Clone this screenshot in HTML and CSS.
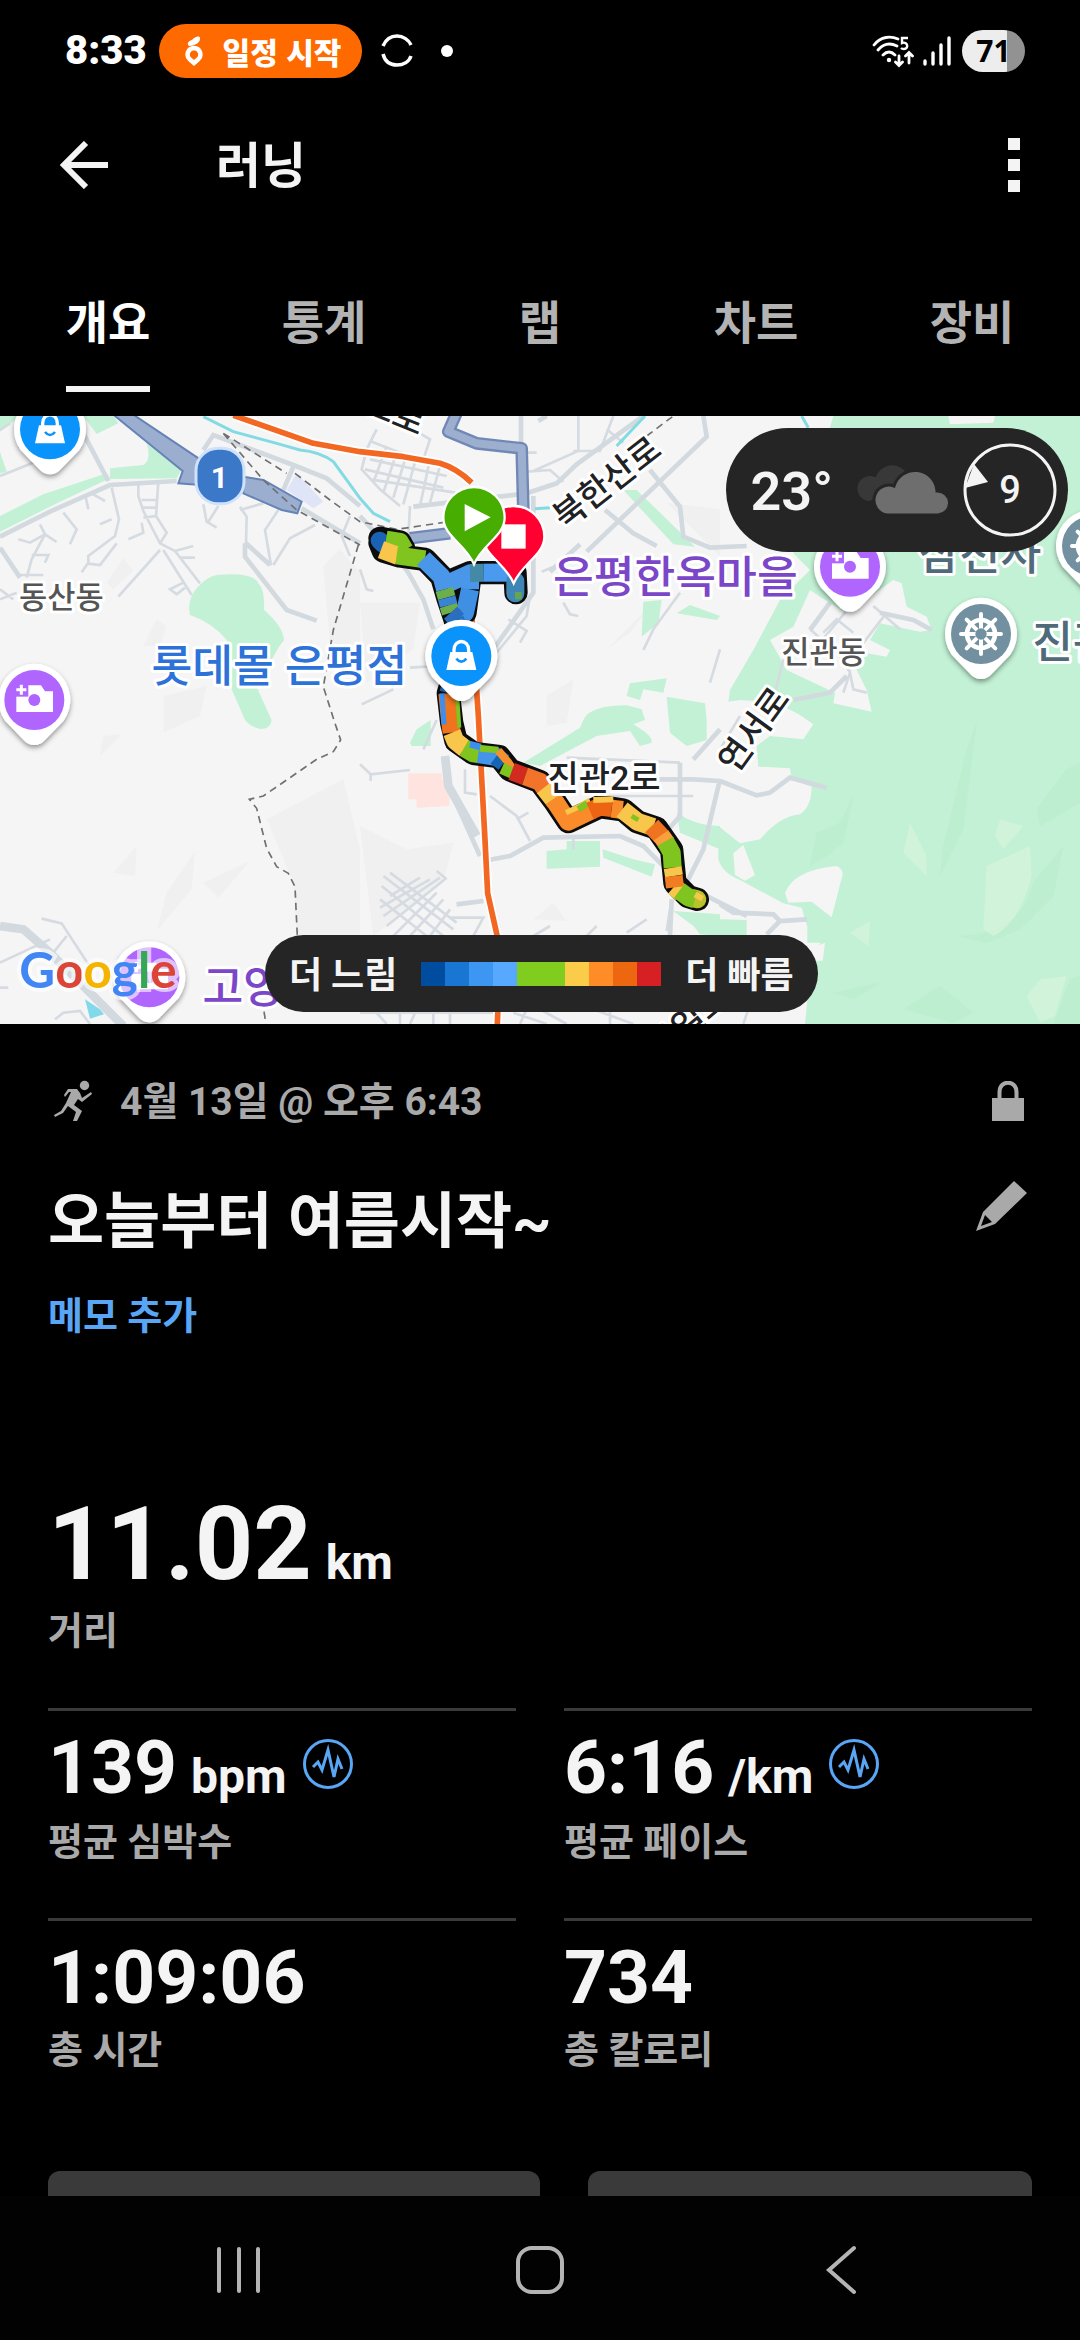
FILE: index.html
```html
<!DOCTYPE html>
<html lang="ko">
<head>
<meta charset="utf-8">
<meta name="viewport" content="width=device-width, initial-scale=1">
<title>러닝</title>
<link rel="stylesheet" href="styles.css">
</head>
<body>
<div class="status">
  <span class="clock">8:33</span>
  <span class="event"><svg width="18" height="30" viewBox="0 0 18 30" aria-hidden="true"><path d="M4 10C1 7 4 5 7 4C10 0 16-1 15 3C15 7 9 10 4 10Z" fill="#fff"/><path d="M9 12a6.500 6.500 0 0 1 4 11.500L9 27L5 23.500A6.500 6.500 0 0 1 9 12Z" fill="none" stroke="#fff" stroke-width="4.500"/></svg>일정 시작</span>
  <svg class="ring" width="32" height="34" viewBox="0 0 32 34" aria-hidden="true"><path d="M2 12C5 5 10 2 16 2S28 6 30 11M2 20C4 28 10 31 16 31S28 28 30 22" fill="none" stroke="#fff" stroke-width="3.500"/></svg>
  <span class="dot"></span>
  <svg class="wifi" width="42" height="34" viewBox="0 0 42 34" aria-hidden="true"><g fill="none" stroke="#fff" stroke-width="2.800" stroke-linecap="round"><path d="M2 11C9 2 19 2 26 5M6 16C12 9 19 9 25 12M11 21C15 17 19 17 23 21M27 22V31M23.500 28L27 31.500L30.500 28M37 29V19M33.500 22L37 18.500L40.500 22"/></g><circle cx="17" cy="26" r="2.200" fill="#fff"/><path d="M36 4H30V9C36 7 37 15 32 15Q30 15 29 14" fill="none" stroke="#fff" stroke-width="2.400"/></svg>
  <svg class="signal" width="28" height="32" viewBox="0 0 28 32" aria-hidden="true"><path d="M2 26V29M10 18V29M18 10V29M26 3V29" stroke="#fff" stroke-width="3.400" stroke-linecap="round"/></svg>
  <span class="battery">71</span>
</div>
<header class="bar">
  <button class="icon" aria-label="뒤로"><svg width="48" height="48" viewBox="0 0 48 48"><path d="M26 2L4 24L26 46M3 24H48" fill="none" stroke="#f4f4f4" stroke-width="6"/></svg></button>
  <h1>러닝</h1>
  <button class="icon" aria-label="더보기"><svg width="12" height="54" viewBox="0 0 12 54"><path d="M0 0H12V12H0ZM0 21H12V33H0ZM0 42H12V54H0Z" fill="#f4f4f4"/></svg></button>
</header>
<nav class="tabs">
  <a href="#overview" class="tab active"><span>개요</span></a>
  <a href="#stats" class="tab"><span>통계</span></a>
  <a href="#laps" class="tab"><span>랩</span></a>
  <a href="#charts" class="tab"><span>차트</span></a>
  <a href="#gear" class="tab"><span>장비</span></a>
</nav>
<main id="overview">
<section class="map">
<svg class="canvas" viewBox="0 0 3240 1824" preserveAspectRatio="xMidYMid slice">
<defs>
  <path id="pin" d="M0 135Q-20 135-35 117L-88 62A108 108 0 1 1 88 62L35 117Q20 135 0 135Z"/>
  <path id="drop" d="M0 140C-25 80-92 55-92 0A92 92 0 1 1 92 0C92 55 25 80 0 140Z"/>
  <g id="bag"><use href="#pin" fill="#fff" filter="url(#shadow)"/><circle r="90" fill="#0a93fb"/><path d="M-33-12H33L45 42H-45Z" fill="#fff"/><path d="M-22-8V-18C-22-52 22-52 22-18V-8" fill="none" stroke="#fff" stroke-width="10"/><path d="M-15 8Q0 26 15 8" fill="none" stroke="#0a93fb" stroke-width="8"/></g>
  <g id="camera"><use href="#pin" fill="#fff" filter="url(#shadow)"/><circle r="90" fill="#b065ff"/><path d="M-54 36V-20H-20V-44H20L32-26H56V36Z" fill="#fff"/><path d="M-60-50H-18V-10H-60Z" fill="#b065ff"/><path d="M-39-46V-16M-54-31H-24" stroke="#fff" stroke-width="9"/><circle r="18" fill="#b065ff"/></g>
  <g id="wheel"><use href="#pin" fill="#fff" filter="url(#shadow)"/><circle r="90" fill="#72909f"/><g fill="none" stroke="#fff" stroke-linecap="round"><circle r="42" stroke-width="14"/><path d="M-60 0H60M0-60V60M-43-43L43 43M43-43L-43 43" stroke-width="12"/></g><circle r="17" fill="#72909f"/></g>
  <filter id="shadow" x="-30%" y="-30%" width="160%" height="160%"><feDropShadow dx="0" dy="8" stdDeviation="8" flood-opacity=".4"/></filter>
</defs>
<rect width="3240" height="1824" fill="#f5f5f5"/>

<!-- relief shading -->
<g fill="#f0f0f0">
  <path d="M320 500L370 425L400 465L340 520ZM430 690L470 610L500 630L480 690ZM970 450L1020 400L1080 470V690L990 680ZM490 840L620 810L600 900L490 950ZM300 1020L365 955L310 960ZM610 1400L750 1335L655 1445ZM500 1430L585 1305L575 1420L470 1545ZM800 1210L1030 1090L1080 1300V1560H890L880 1400ZM340 1370L410 1290L405 1380Z"/>
  <path d="M1080 1230L1220 1300L1360 1280L1330 1400L1120 1560ZM1640 840L1720 790L1700 920L1640 930ZM1820 700L1960 560L1890 650ZM1600 1510L1660 1460L1700 1515ZM1080 560L1260 560L1240 700L1100 800ZM2000 260L2160 280V420Z"/>
</g>

<!-- parks and forest -->
<g fill="#c2f1d5">
  <path d="M0 0H60L0 47ZM250 0H340L355 22L290 54ZM0 107L20 167L0 172ZM0 300L130 235L320 172L330 187L180 257L0 347ZM330 157L430 147Q455 130 440 82L380 50L440 82L545 160L530 187L330 189Z"/>
  <path d="M650 477Q760 467 775 502Q795 522 792 582Q850 632 852 672L835 695L770 812Q800 880 815 912Q812 939 780 939Q750 932 735 912L695 820L680 672Q640 622 570 597Q560 552 590 517Q620 482 650 477Z"/>
  <path d="M1870 222L1910 222L2085 392L2020 385ZM1930 557L1985 552L1975 622L1925 662ZM2030 592L2070 567L2160 600L2150 612ZM1890 802L2000 787L1990 830L1930 820L1920 852L1880 840ZM1750 912Q1770 868 1880 868L1925 880L1935 912L1900 925Q1960 960 1955 980L1920 990L1890 945L1790 960L1620 1050L1570 1040L1740 935ZM2000 842L2115 862L2120 912V972L2060 990L2010 950Z"/>
  <path d="M1230 980L1250 940L1292 912V990H1235ZM1640 1305L1700 1300V1275H1800V1352L1640 1358ZM1808 1300L1900 1330L1965 1345L1955 1382L1810 1325ZM2030 1190Q2090 1230 2160 1230V1300L2040 1250ZM2020 1485L2160 1495V1560L2100 1555L2080 1530Z"/>
  <path d="M2500 0H3240V1824H2415L2435 1622L2462 1580H2422V1532L2405 1475L2350 1462L2220 1392Q2165 1370 2155 1330V1230L2220 1282L2280 1270Q2340 1200 2400 1195Q2435 1170 2435 1112L2375 1090L2370 1057L2275 1052L2270 990L2310 960L2410 970L2440 925L2400 897L2330 860L2220 852L2185 857L2190 822L2260 702L2340 552L2430 462L2380 412ZM2160 1510L2240 1512V1560H2160Z"/>
</g>
<g fill="#f5f5f5">
  <path d="M2460 542L2540 592L2680 492L2705 502L2720 572L2780 602L2795 642L2760 647L2640 622L2610 672L2670 702L2660 722L2600 712L2560 742L2600 822L2615 887L2500 862L2505 830L2360 762L2310 672L2380 632L2430 522Z"/>
  <path d="M2355 1432Q2380 1362 2510 1350Q2535 1362 2525 1387L2495 1504L2435 1457L2365 1460ZM2200 1312L2230 1287L2265 1377L2235 1394L2205 1377ZM2435 1597L2475 1580L2468 1634H2435ZM2845 0H2985L2980 20L2850 25Z"/>
</g>
<g fill="#b9ebcb" opacity=".5">
  <path d="M2450 1250L2520 1220L2560 1140L2530 1280L2480 1320L2430 1350ZM2830 1290L2900 1000L2930 920L2890 1240L2820 1380ZM3110 1180L3200 1060L3240 1040V1160L3120 1230ZM3100 1400L3190 1290L3160 1440L3060 1540L2960 1580L2870 1560Q3060 1560 3100 1400ZM2710 1780L2820 1710L2920 1790L2860 1820ZM3160 1824L3210 1690L3240 1680V1824ZM2500 1730L2640 1700L2560 1750Z"/>
</g>
<g fill="#d5f4da" opacity=".8">
  <path d="M2960 1350L3090 1290L3095 1380Q3060 1520 2980 1560L2950 1540ZM2730 1220L2780 1320V1380L2710 1310ZM3000 1210L3070 1230L3010 1300L2985 1260ZM3080 1740L3120 1690L3200 1680L3165 1800L3120 1820ZM2550 1550L2610 1515L2605 1590Z"/>
</g>
<path d="M890 172L970 257L940 277L860 222Z" fill="#dfe5f7"/>
<path d="M1225 1072H1325V1090H1348V1170L1250 1175V1150H1225Z" fill="#ffe3de"/>
<path d="M255 1750L300 1780L312 1795L270 1808Z" fill="#82d9ea"/>

<!-- minor roads -->
<g fill="none" stroke="#d5dbe1" stroke-width="8">
  <path d="M0 180L120 132M0 42L30 22M245 469L265 440V420L345 360L357 310L335 215M265 443L300 447L350 382M120 325L135 355L95 430L80 485M60 477H130M55 370L90 380L135 355L170 378M190 290L230 340L210 385M95 417H145L135 440M255 235L265 280M270 230L315 255M335 310L300 325M355 542L480 402M415 197V240L430 285L480 382L525 405L600 502M475 197L468 300L430 305M425 252H470M425 275H470M468 300L500 350L480 382M490 402L575 537M525 405L580 390M540 425H585M550 500L510 520L530 535L555 515M425 320L430 350L385 370M610 265L620 317L650 335M625 317L655 270M720 272L740 302L738 382L815 447M720 282L790 262M835 282L795 342L812 442M945 327L870 367L820 447M1050 300L1025 360L1050 420M0 520L40 550M0 550L50 530"/>
  <path d="M1110 75L1200 110L1290 130M1130 40L1100 100L1085 160L1140 220L1200 270M1160 90L1120 200M1190 110L1150 230M1220 115L1180 245M1250 120L1210 265M1290 130L1260 270M1320 150L1290 260M1110 130L1340 180M1095 160L1330 215M1110 190L1400 235M1240 40L1290 70L1270 130M1230 270L1225 360M1735 0V105L1600 165M1580 167L1650 162L1690 197M1560 110H1610M1720 105H1800L1840 0M1820 40L1870 80M1080 460L1100 520L1120 525M1590 540L1580 600L1480 722M1525 610L1580 645L1560 680M1625 467L1680 445M1690 560L1710 595L1735 600M2040 530L1960 640L1930 702M1230 755L1380 745M1085 865L1180 820"/>
  <path d="M1080 1045L1112 1075L1230 1062M1112 1075V1095M1395 1060V1130L1430 1135M1270 1000L1310 912M1470 1140L1550 1200L1590 1275M1550 1210L1585 1190M1720 1265V1300M1800 1140H2080M1700 1025L2040 1040M2160 700L2130 800M2220 900L2160 1000"/>
  <path d="M2430 640L2520 720M2460 680L2560 560M2560 720L2660 590M2540 720L2560 820L2600 830M2520 720L2550 770L2530 830M2470 650L2510 610L2560 650M2620 570L2700 640M2350 730L2320 850"/>
  <path d="M1150 1380L1360 1540M1145 1410L1330 1560M1140 1450L1280 1560M1170 1440L1260 1385M1140 1475L1290 1390M1150 1500L1320 1385M1160 1530L1340 1385M1180 1560L1310 1430M1230 1560L1330 1450M1290 1560L1350 1480M1170 1370L1370 1520M1350 1505H1450L1420 1560M1370 1465L1450 1455M1310 1365L1335 1385M1600 1560L1650 1530M1760 1560L1790 1530M1880 1550L1940 1510M2000 1545L2010 1480"/>
  <path d="M1080 1790H1500M1120 1780L1160 1824M1200 1780V1824M1250 1780L1230 1824M1300 1780V1824M1350 1780V1824M1540 1790L1640 1824M1580 1780L1560 1824M1620 1780L1700 1824M1780 1780L1900 1824M1830 1780V1824M2245 1780L2230 1824"/>
  <path d="M125 1508L185 1522L265 1645M0 1640L150 1570M160 1610L200 1560M165 1810L190 1790L240 1785L270 1824M0 1715H25"/>
</g>
<g fill="none" stroke="#d2d9df" stroke-width="14">
  <path d="M0 362L160 282L330 207L530 195M250 52L325 195M0 395L60 485M610 102L640 57L880 147L980 187L1080 270M880 152L850 222M905 277L1080 382M735 382V422L860 582L950 614M738 382L810 447"/>
  <path d="M1563 0V100M1240 272L1580 232L1670 202L1730 145L1930 0M1640 0L1615 15M1950 162L2040 272L2050 362L2130 395L2240 390M1815 282L1900 352L1970 390M2110 0L2120 62L1760 407M1600 240V530L1480 700M1080 300L1180 410L1225 470L1270 550L1300 640M1650 467L1740 385"/>
  <path d="M1450 1335L1530 1320L1630 1265L1860 1260L1930 1290L2000 1360M2080 1030L2160 940M2040 1040V1200L1970 1280M2160 1095L2080 1090L1900 1090M2160 1090L2110 1300L2060 1400M1370 1465L1450 1455M1340 1025L1350 1120L1440 1320M2010 1560L2015 1450M2110 1435L2240 1500"/>
  <path d="M2160 1095L2270 1138L2310 1130L2370 1085L2480 1115M2160 1465L2200 1490L2320 1495L2340 1515L2420 1510M2340 1515L2300 1555M2640 590L2740 612L2795 642M2380 852L2490 830L2540 780M2430 642L2490 560"/>
</g>
<g fill="none" stroke="#d2d9df" stroke-width="26">
  <path d="M0 1530L70 1540L150 1610L370 1830M1335 1020L1345 1110L1430 1260"/>
</g>

<!-- streams -->
<g fill="none" stroke="#82dbe3" stroke-width="9">
  <path d="M610 2L700 47L830 82L900 102Q960 107 1000 137L1080 247L1120 292L1170 317M1935 0L1850 90M1605 278L1650 275M2405 0L2425 35"/>
</g>

<!-- expressway -->
<g fill="#9caed0" stroke="#6583b5" stroke-width="6"><path d="M340-4H400L600 130V207L535 202L548 165ZM730 182L790 192L905 257L892 292L845 282L730 232Z"/></g>
<g fill="none" stroke-linejoin="round">
  <path d="M1370-10L1345 47L1430 82L1565 97L1570 280M1230 367L1350 352" stroke="#7188b6" stroke-width="38"/>
  <path d="M1370-10L1345 47L1430 82L1565 97L1570 280M1230 367L1350 352" stroke="#9dafce" stroke-width="24"/>
</g>

<!-- railway -->
<g fill="none" stroke-linejoin="round">
  <path d="M700-2L940 82L1080 107L1210 122L1320 142Q1370 157 1415 200M1415 592L1435 900L1455 1272L1463 1432L1492 1562L1497 1700L1492 1824" stroke="#fff" stroke-width="28"/>
  <path d="M700-2L940 82L1080 107L1210 122L1320 142Q1370 157 1415 200M1415 592L1435 900L1455 1272L1463 1432L1492 1562L1497 1700L1492 1824" stroke="#f26722" stroke-width="17"/>
</g>

<!-- tunnels and district border -->
<path d="M670 52L860 172M670 52L790 192L890 282L1080 387M885 172L990 252L1080 317L1190 340L1340 318M1075 387L1000 642L970 812L1005 922L1022 972L1000 1007L950 1030L790 1140L748 1150L770 1177L800 1297L830 1352L865 1372L885 1412L892 1562M792 1787L798 1824M1940 60L2020 0" fill="none" stroke="#707070" stroke-width="5" stroke-dasharray="22 15"/>

<!-- recorded route, coloured by pace -->
<g fill="none" stroke-linejoin="round" stroke-linecap="round">
  <path d="M1140 367L1200 378L1212 400M1140 380L1150 405L1200 420L1275 430L1325 482L1345 550L1365 610L1385 700L1345 832L1355 920L1368 975L1420 1012L1498 1022L1530 1062L1620 1097L1665 1157L1705 1217L1800 1172L1870 1182L1912 1217L1970 1237L2015 1302L2025 1402L2065 1442L2092 1450M1335 502L1410 470L1545 470L1548 530M1410 480L1395 590L1370 610" stroke="#0c0c0c" stroke-width="70"/>
</g>
<g fill="none" stroke-width="54" stroke-linejoin="round">
  <path d="M1139 374L1150 384" stroke="#1a62b3" stroke-linecap="round"/>
  <path d="M1158 371L1200 378L1214 402" stroke="#80c41f"/>
  <path d="M1143 401L1195 420" stroke="#f8c64a"/>
  <path d="M1190 418L1275 430" stroke="#80c41f"/>
  <path d="M1270 428L1325 482L1335 520" stroke="#4a97ea"/>
  <path d="M1338 505L1410 472L1410 520" stroke="#4a97ea"/>
  <path d="M1410 520L1395 590L1375 612" stroke="#3f8fe4"/>
  <path d="M1410 471L1450 470" stroke="#4489a6"/><path d="M1450 470H1535" stroke="#4a9af0"/>
  <path d="M1546 495V532" stroke="#3f86b4" stroke-linecap="round"/><path d="M1555 528V550" stroke="#63a552" stroke-width="20"/>
  <path d="M1333 520L1340 545M1345 568L1352 590" stroke="#6bae4b"/>
  <path d="M1340 545L1346 568" stroke="#3a82d2"/><path d="M1352 590L1372 612" stroke="#2d6dbd"/>
  <path d="M1365 605L1383 700L1345 832" stroke="#2474c4"/>
  <path d="M1342 832L1350 912L1355 950" stroke="#f0731d"/>
  <path d="M1326 832L1332 925" stroke="#3c8ff0" stroke-width="15"/>
  <path d="M1371 832L1378 935" stroke="#80c41f" stroke-width="12"/>
  <path d="M1356 950L1366 975L1395 998" stroke="#f8c64a"/>
  <path d="M1392 996L1420 1012L1440 1015" stroke="#80c41f"/>
  <path d="M1410 985L1442 993" stroke="#3c8ff0" stroke-width="20"/>
  <path d="M1435 1014L1498 1024" stroke="#4594eb"/>
  <path d="M1440 997L1495 1002" stroke="#80c41f" stroke-width="20"/>
  <path d="M1488 1022L1512 1040" stroke="#1565b5"/>
  <path d="M1495 1004L1524 1038L1540 1062" stroke="#f5902d" stroke-width="24"/>
  <path d="M1505 1057L1545 1075" stroke="#80c41f" stroke-width="34"/>
  <path d="M1535 1066L1575 1081" stroke="#d32a20"/>
  <path d="M1575 1081L1620 1097L1635 1119" stroke="#f2742a"/>
  <path d="M1632 1115L1665 1157" stroke="#f8c64a"/>
  <path d="M1660 1149L1705 1217L1778 1182" stroke="#fa8b2a"/>
  <path d="M1698 1190L1735 1173L1770 1153" stroke="#f8c64a" stroke-width="16"/>
  <path d="M1735 1180L1762 1162" stroke="#80c41f" stroke-width="20"/>
  <path d="M1770 1185L1800 1172L1835 1176" stroke="#ec6414"/>
  <path d="M1835 1178L1868 1182" stroke="#fa8b2a"/>
  <path d="M1780 1152L1840 1150" stroke="#f8c64a" stroke-width="18"/>
  <path d="M1866 1181L1912 1217L1960 1233" stroke="#f8c64a"/>
  <path d="M1895 1200L1915 1212" stroke="#80c41f" stroke-width="14"/>
  <path d="M1955 1230L1985 1262" stroke="#f07320"/>
  <path d="M1983 1258L2000 1282" stroke="#f8a03d"/>
  <path d="M1996 1276L2015 1310L2018 1355" stroke="#80c41f"/>
  <path d="M2018 1355L2022 1380M2022 1412L2045 1432" stroke="#f8c64a"/>
  <path d="M2021 1380L2025 1414" stroke="#f07d22"/>
  <path d="M2080 1447L2092 1450" stroke="#b8c22c" stroke-linecap="round"/>
  <path d="M2038 1424L2065 1444L2085 1450" stroke="#80c41f"/>
  <path d="M2085 1436L2108 1448" stroke="#f8c64a" stroke-width="18"/>
</g>

<!-- place names -->
<g class="names" text-anchor="middle">
  <text class="district" x="184" y="576">동산동</text>
  <text class="district" x="2471" y="740">진관동</text>
  <text class="mall" x="838" y="798">롯데몰 은평점</text>
  <text class="sight" x="2026" y="530">은평한옥마을</text>
  <text class="temple" x="2940" y="462">삼천사</text>
  <text class="temple" x="3280" y="727">진관사</text>
  <text class="sight" x="730" y="1760">고양</text>
  <text class="road" x="1812" y="1122">진관2로</text>
  <text class="road" transform="translate(1843 228) rotate(-38)">북한산로</text>
  <text class="road" transform="translate(2290 962) rotate(-54)">연서로</text>
  <text class="road" transform="translate(1170 24) rotate(22)">으로</text>
  <text class="road" transform="translate(2088 1846) rotate(-40)">통일로</text>
</g>

<rect x="588" y="97" width="144" height="166" rx="66" fill="#3b78c8" stroke="#cfe2fb" stroke-width="9"/>
<text class="shield" x="658" y="216" text-anchor="middle">1</text>
<use href="#bag" x="150" y="40"/>
<use href="#bag" x="1384" y="720"/>
<use href="#camera" x="103" y="852"/>
<use href="#camera" x="2550" y="452"/>
<use href="#camera" x="448" y="1684"/>
<use href="#wheel" x="2943" y="654"/>
<use href="#wheel" x="3276" y="390"/>
<g stroke="#fff" stroke-width="7">
  <use href="#drop" x="1541" y="362" fill="#ff0030"/>
  <path d="M1504 325H1577V398H1504Z" fill="#fff" stroke="none"/>
  <use href="#drop" x="1422" y="305" fill="#47ad00"/>
  <path d="M1394 264L1472 304L1394 346Z" fill="#fff" stroke="none"/>
</g>
<text class="brand" x="58" y="1716"><tspan fill="#4285f4">G</tspan><tspan fill="#db4437">o</tspan><tspan fill="#f4b400">o</tspan><tspan fill="#4285f4">g</tspan><tspan fill="#34a853">l</tspan><tspan fill="#db4437">e</tspan></text>
</svg>
<div class="weather">
  <span class="temp">23°</span>
  <svg width="94" height="54" viewBox="0 0 94 54" aria-hidden="true"><path d="M13 38A12 12 0 0 1 15 13Q18 14 20 14A17 17 0 0 1 51 11L40 28Z" fill="#383838"/><path d="M31 52A15 15 0 1 1 38 23A22 22 0 0 1 81 28A12 12 0 0 1 82 52Z" fill="#6e6e6e" stroke="#252525" stroke-width="3"/></svg>
  <span class="wind"><svg width="96" height="96" viewBox="0 0 96 96" aria-hidden="true"><circle cx="48" cy="48" r="45" fill="none" stroke="#f4f4f4" stroke-width="3"/><path d="M12 22L26 40L3 46Z" fill="#f4f4f4"/></svg><b>9</b></span>
</div>
<div class="legend">
  <span>더 느림</span>
  <div class="scale"><i class="s1"></i><i class="s2"></i><i class="s3"></i><i class="s4"></i><i class="s5"></i><i class="s5"></i><i class="s6"></i><i class="s7"></i><i class="s8"></i><i class="s9"></i></div>
  <span>더 빠름</span>
</div>
</section>

<section class="details">
  <div class="meta">
    <svg width="40" height="42" viewBox="0 0 40 42" aria-hidden="true"><circle cx="30.500" cy="5.500" r="4.700" fill="#a9a9a9"/><path d="M10 15L14 9H23L26 13L28 18L37 12L38 14L28 22L24 19L20 25L28 31L23 41H19L22 32L14 26L9 33L1 37L0 35L7 31L12 23L17 12H15L11 17Z" fill="#a9a9a9"/></svg>
    <span>4월 13일 @ 오후 6:43</span>
    <svg class="lock" width="32" height="40" viewBox="0 0 32 40" aria-hidden="true"><path d="M0 17H32V40H0Z" fill="#a9a9a9"/><path d="M7.500 18V11C7.500-1.500 24.500-1.500 24.500 11V18" fill="none" stroke="#a9a9a9" stroke-width="4"/></svg>
  </div>
  <div class="title">
    <h2>오늘부터 여름시작~</h2>
    <button class="icon" aria-label="이름 수정"><svg width="54" height="52" viewBox="0 0 54 52"><path fill-rule="evenodd" d="M39 1L52 13L20 44L1 51L8 32ZM10 35L6 46L17 42Z" fill="#a9a9a9"/></svg></button>
  </div>
  <a class="memo" href="#memo">메모 추가</a>

  <div class="stat distance">
    <p class="value"><span>11.02</span><small>km</small></p>
    <p class="label">거리</p>
  </div>
  <div class="grid">
    <div class="stat">
      <p class="value"><span>139</span><small>bpm</small><svg class="pulse" width="50" height="50" viewBox="0 0 50 50" aria-hidden="true"><g fill="none" stroke="#58a6f5"><circle cx="25" cy="25" r="23.500" stroke-width="3"/><path d="M10 28L15 23L19 31L25 11L31 38L35 20L39 30" stroke-width="3"/></g></svg></p>
      <p class="label">평균 심박수</p>
    </div>
    <div class="stat">
      <p class="value"><span>6:16</span><small>/km</small><svg class="pulse" width="50" height="50" viewBox="0 0 50 50" aria-hidden="true"><g fill="none" stroke="#58a6f5"><circle cx="25" cy="25" r="23.500" stroke-width="3"/><path d="M10 28L15 23L19 31L25 11L31 38L35 20L39 30" stroke-width="3"/></g></svg></p>
      <p class="label">평균 페이스</p>
    </div>
    <div class="stat">
      <p class="value"><span>1:09:06</span></p>
      <p class="label">총 시간</p>
    </div>
    <div class="stat">
      <p class="value"><span>734</span></p>
      <p class="label">총 칼로리</p>
    </div>
  </div>
  <div class="actions"><button class="wide" aria-label="통계 보기"></button><button aria-label="랩 보기"></button></div>
</section>
</main>
<footer class="system">
  <button aria-label="최근 앱"><svg width="46" height="48" viewBox="0 0 46 48"><path d="M3 3V45M23 3V45M42 3V45" stroke="#b4b4b4" stroke-width="4" stroke-linecap="round"/></svg></button>
  <button aria-label="홈"><svg width="50" height="50" viewBox="0 0 50 50"><rect x="3" y="3" width="44" height="44" rx="14" fill="none" stroke="#b4b4b4" stroke-width="4"/></svg></button>
  <button aria-label="뒤로 가기"><svg width="32" height="50" viewBox="0 0 32 50"><path d="M29 3L4 25L29 47" fill="none" stroke="#b4b4b4" stroke-width="4" stroke-linecap="round"/></svg></button>
</footer>
</body>
</html>
```
FILE: styles.css
```css
* { box-sizing: border-box; }
body {
  margin: 0;
  height: 100vh;
  display: flex;
  flex-direction: column;
  background: #000;
  color: #f4f4f4;
  font-family: Roboto, "Noto Sans CJK KR", sans-serif;
  font-weight: 700;
}
h1, h2, p { margin: 0; }
svg { display: block; flex: none; }
a { color: inherit; text-decoration: none; }
button { border: 0; padding: 0; background: none; cursor: pointer; }

.status {
  flex: none;
  height: 102px;
  padding: 0 55px 0 65px;
  display: flex;
  align-items: center;
  color: #fff;
}
.clock { font: 900 40px/52px Roboto, sans-serif; }
.event {
  display: flex;
  align-items: center;
  gap: 20px;
  height: 54px;
  margin-left: 12px;
  padding: 0 21px 0 26px;
  border-radius: 27px;
  background: #ff6a00;
  font: 900 30px/54px "Noto Sans CJK KR", sans-serif;
}
.ring { margin-left: 19px; }
.dot { width: 12px; height: 12px; margin-left: 28px; border-radius: 50%; background: #fff; }
.wifi { margin-left: auto; }
.signal { margin-left: 9px; }
.battery {
  width: 63px;
  height: 42px;
  margin-left: 11px;
  border-radius: 21px;
  background: linear-gradient(90deg, #ededed 72%, #929292 72%);
  color: #000;
  font: 700 30px/42px "Noto Sans", sans-serif;
  text-align: center;
}

.bar { flex: none; height: 126px; padding: 0 60px; display: flex; align-items: center; }
.bar h1 { flex: 1; margin-left: 108px; padding-top: 4px; font-size: 49px; line-height: 72px; }

.tabs {
  flex: none;
  display: grid;
  grid-template-columns: repeat(5, 1fr);
  padding: 63px 0 24px;
}
.tab { text-align: center; color: #b3b3b3; font-size: 46px; line-height: 64px; }
.tab span { display: inline-block; padding-bottom: 31px; border-bottom: 6px solid transparent; }
.tab.active { color: #fff; }
.tab.active span { border-color: #f4f4f4; }

main { flex: 1; min-height: 0; overflow: hidden; }
.map { position: relative; aspect-ratio: 1080 / 608; }
.canvas { width: 100%; height: 100%; }
.names { font-family: Roboto, "Noto Sans CJK KR", sans-serif; paint-order: stroke; stroke: #fff; stroke-width: 18px; stroke-linejoin: round; }
.district { font-size: 92px; font-weight: 500; fill: #555; }
.mall { font-size: 133px; font-weight: 500; fill: #2d72d9; }
.sight { font-size: 133px; font-weight: 500; fill: #7b46c8; }
.temple { font-size: 133px; font-weight: 500; fill: #4f6b7a; }
.road { font-size: 102px; font-weight: 500; fill: #202124; }
.shield { font-size: 90px; font-weight: 700; fill: #fff; }
.brand { font: 700 148px Lato, sans-serif; paint-order: stroke; stroke: rgba(255, 255, 255, .6); stroke-width: 24px; }

.weather {
  position: absolute;
  top: 12px;
  right: 12px;
  height: 124px;
  padding: 0 10px 0 24px;
  display: flex;
  align-items: center;
  border-radius: 62px;
  background: #252525;
}
.temp { padding-top: 4px; font-size: 54px; font-weight: 600; line-height: 64px; }
.weather > svg { margin: 0 12px 0 23px; }
.wind { display: grid; place-items: center; }
.wind > * { grid-area: 1 / 1; }
.wind b { font-size: 38px; font-weight: 500; }

.legend {
  position: absolute;
  left: 265px;
  bottom: 12px;
  height: 77px;
  padding: 0 24px;
  display: flex;
  align-items: center;
  gap: 24px;
  border-radius: 39px;
  background: #252525;
  font-size: 36px;
  line-height: 72px;
}
.legend span { padding-top: 4px; }
.scale { display: flex; }
.scale i { width: 24px; height: 24px; }
.s1 { background: #004c9f; }
.s2 { background: #1976d2; }
.s3 { background: #3d96f2; }
.s4 { background: #57a8ff; }
.s5 { background: #80cc1f; }
.s6 { background: #fbcc4a; }
.s7 { background: #ff8c26; }
.s8 { background: #ec6710; }
.s9 { background: #d62023; }

.details { padding: 50px 48px 0; }
.meta { display: flex; align-items: center; color: #a9a9a9; font-size: 39px; line-height: 52px; padding-left: 6px; }
.meta span { margin-left: 26px; padding-top: 2px; }
.lock { margin: 0 8px 0 auto; }
.title { display: flex; justify-content: space-between; align-items: flex-start; margin-top: 52px; }
.title h2 { font-size: 61px; line-height: 84px; }
.title .icon { margin-right: 3px; }
.memo { display: block; width: max-content; margin-top: 28px; color: #58a6f5; font-size: 38px; line-height: 48px; }

.value { display: flex; align-items: baseline; gap: 14px; font-size: 75px; line-height: 76px; }
.value small { font-size: 48px; line-height: 60px; }
.pulse { align-self: center; margin: 0 0 8px 2px; }
.label { margin-top: 11px; color: #a9a9a9; font-size: 38px; line-height: 48px; }
.distance { margin-top: 152px; }
.distance .value { font-size: 102px; line-height: 104px; }
.grid { display: grid; grid-template-columns: 1fr 1fr; column-gap: 48px; margin-top: 53px; }
.grid .stat { border-top: 3px solid #3a3a3a; padding: 18px 0 52px; }

.actions { display: flex; gap: 48px; margin-top: 45px; }
.actions button { flex: 444; height: 132px; border-radius: 12px; background: #3a3a3a; }
.actions .wide { flex: 492; }

.system {
  flex: none;
  height: 144px;
  padding: 4px 88px 0;
  display: grid;
  grid-template-columns: repeat(3, 1fr);
  background: #020202;
}
.system button { display: grid; place-items: center; }
```
